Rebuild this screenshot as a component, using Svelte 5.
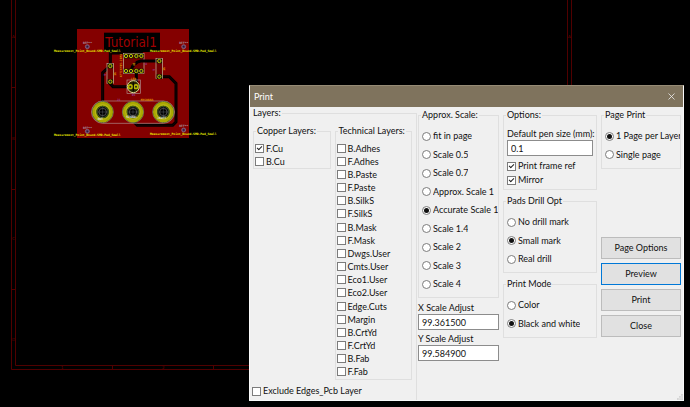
<script>
  // Layers that can be printed
  let copperLayers = $state([
    { name: 'F.Cu', checked: true },
    { name: 'B.Cu', checked: false }
  ]);

  let technicalLayers = $state(
    [
      'B.Adhes', 'F.Adhes', 'B.Paste', 'F.Paste', 'B.SilkS', 'F.SilkS',
      'B.Mask', 'F.Mask', 'Dwgs.User', 'Cmts.User', 'Eco1.User', 'Eco2.User',
      'Edge.Cuts', 'Margin', 'B.CrtYd', 'F.CrtYd', 'B.Fab', 'F.Fab'
    ].map((name) => ({ name, checked: false }))
  );

  const scales = [
    'fit in page', 'Scale 0.5', 'Scale 0.7', 'Approx. Scale 1',
    'Accurate Scale 1', 'Scale 1.4', 'Scale 2', 'Scale 3', 'Scale 4'
  ];
  const drillOptions = ['No drill mark', 'Small mark', 'Real drill'];
  const printModes = ['Color', 'Black and white'];
  const pagePrints = ['1 Page per Layer', 'Single page'];

  let scale = $state('Accurate Scale 1');
  let drill = $state('Small mark');
  let mode = $state('Black and white');
  let pagePrint = $state('1 Page per Layer');

  let penSize = $state('0.1');
  let frameRef = $state(true);
  let mirror = $state(true);
  let xScale = $state('99.361500');
  let yScale = $state('99.584900');
  let excludeEdges = $state(false);
  let open = $state(true);

  // Board drawing
  const footprint = 'Measurement_Point_Round-SMD-Pad_Small';
  const testPoints = [
    { x: 112, y: 80, tx: 12, ty: 96 },
    { x: 401, y: 80, tx: 300, ty: 96 },
    { x: 112, y: 334, tx: 12, ty: 349 },
    { x: 401, y: 330, tx: 300, ty: 346 }
  ];
  const pots = [158, 249, 340];
  const icPins = [228, 243, 259, 274];
  const resistors = [
    { x: 181, y1: 138, y2: 185 },
    { x: 328, y1: 123, y2: 170 }
  ];
</script>

<main class="desktop">
  <svg class="canvas" viewBox="0 0 690 407" preserveAspectRatio="xMinYMin slice" aria-hidden="true">
    <!-- sheet frame -->
    <g class="frame">
      <path d="M11.5 0V369.5H571.5V0" />
      <path d="M15.5 0V365.5H567.5V0" />
      <path d="M11 87.5h4M11 189.5h4M11 289.5h4M112.5 366v4M213.5 366v4" />
    </g>
    <g class="frame-text">
      <text x="12" y="38">A</text>
      <text x="12" y="140">B</text>
      <text x="12" y="240">C</text>
      <text x="12" y="341">D</text>
      <text x="61" y="369">1</text>
      <text x="162" y="369">2</text>
      <text x="568" y="38">A</text>
    </g>

    <!-- pcb, drawn at three units per pixel -->
    <g transform="translate(50 20) scale(0.33333)">
      <rect x="81" y="27" width="336" height="327" fill="#840000" />
      <rect x="162" y="38" width="168" height="58" fill="#000" />
      <text class="title" x="166" y="82">Tutorial1</text>

      <!-- tracks -->
      <g class="track">
        <path d="M181 138V99H274V108" />
        <path d="M181 138L158 158V275" />
        <path d="M181 185V192L189 200H240" />
        <path d="M328 170H358L378 190V306L368 316H262L249 303" />
      </g>
      <g class="track-edge">
        <path d="M181 138V99H274" />
        <path d="M181 138L158 158V275" />
        <path d="M181 185V192L189 200H240" />
        <path d="M328 170H358L378 190V306L368 316H262L249 303" />
      </g>

      <!-- ic -->
      <rect x="220" y="101" width="62" height="59" class="outline" />
      <g class="track">
        <path d="M243 153L248 138L262 126L272 123H328" />
        <path d="M259 153V200" />
      </g>
      {#each icPins as x}
        {#each [108, 153] as y}
          <rect x={x - 7} y={y - 7} width="14" height="14" fill="#111400" />
          <circle cx={x} cy={y} r="5" class="pad" />
        {/each}
      {/each}
      <text class="part" transform="translate(217 172) rotate(-90)">ATTINY85-20PU</text>
      <text class="part" transform="translate(255 138) rotate(-90)">U1</text>
      <text class="ref" x="286" y="136">U</text>

      <!-- resistors -->
      {#each resistors as r}
        <rect x={r.x - 10} y={r.y1 - 7} width="19" height={r.y2 - r.y1 + 13} class="outline" />
        <rect x={r.x - 8} y={r.y1 - 7} width="16" height="14" fill="#111400" />
        <rect x={r.x - 8} y={r.y2 - 7} width="16" height="14" fill="#111400" />
        <circle cx={r.x} cy={r.y1} r="5" class="pad" />
        <circle cx={r.x} cy={r.y2} r="5" class="pad" />
        <text class="part" transform="translate({r.x + 18} {r.y1 + 29}) rotate(-90)">1k</text>
        <text class="ref" transform="translate({r.x - 12} {r.y1 + 29}) rotate(-90)">R</text>
      {/each}

      <!-- led -->
      <rect x="231" y="180" width="40" height="40" class="courtyard" />
      <circle cx="250" cy="200" r="18" fill="#2a2600" stroke="#d8d890" stroke-width="3" />
      <circle cx="241" cy="200" r="8" fill="#b8b800" />
      <circle cx="258" cy="200" r="8" fill="#b8b800" />
      <circle cx="241" cy="200" r="3" fill="#222" />
      <circle cx="258" cy="200" r="3" fill="#222" />
      <path d="M250 187V214" stroke="#000" stroke-width="3" />
      <text class="part" x="242" y="180">LED</text>
      <text class="ref" x="246" y="227">D1</text>

      <!-- output pads -->
      <path d="M158 243H340A33 33 0 0 1 340 310H158A33 33 0 0 1 158 243Z" class="courtyard" />
      {#each pots as x}
        <circle cx={x} cy="276" r="32" fill="#183000" stroke="#8c9a80" stroke-width="2" />
        <circle cx={x} cy="276" r="25" fill="none" stroke="#aaa800" stroke-width="12" />
        <circle cx={x} cy="276" r="22" fill="none" stroke="#d0d060" stroke-width="1" />
        <circle cx={x} cy="276" r="17" fill="#111" stroke="#55772b" stroke-width="2" />
        <circle cx={x} cy="276" r="11" fill="#000" stroke="#686868" stroke-width="2" />
        <path d="M{x} 262V290M{x - 15} 276H{x + 15}" stroke="#7f8794" stroke-width="1" />
      {/each}
      <text class="net" x="143" y="299">OUT</text>
      <text class="net" x="229" y="295">SIGNAL</text>
      <text class="net" x="322" y="297">+BATT</text>
      <text class="ref" x="201" y="242">J1</text>
      <text class="part" x="272" y="242">MYCONN3</text>

      <!-- test points -->
      {#each testPoints as p}
        <circle cx={p.x} cy={p.y} r="6" fill="#593060" stroke="#8f7b94" stroke-width="2" />
        <circle cx={p.x} cy={p.y} r="2" fill="#222" />
        <text class="tp" x={p.x - 13} y={p.y - 8}>REF**</text>
        <text class="footprint" x={p.tx} y={p.ty}>{footprint}</text>
      {/each}
    </g>
  </svg>

  {#if open}
    <div class="dialog" role="dialog" aria-labelledby="dialog-title">
      <header class="titlebar">
        <h1 id="dialog-title">Print</h1>
        <button class="close" aria-label="Close window" onclick={() => (open = false)}>
          <svg viewBox="0 0 7 7" width="7" height="7"><path d="M0.5 0.5L6.5 6.5M6.5 0.5L0.5 6.5" /></svg>
        </button>
      </header>

      <form class="body" onsubmit={(e) => e.preventDefault()}>
        <fieldset class="layers">
          <legend>Layers:</legend>
          <div class="layer-groups">
            <fieldset class="checks">
              <legend>Copper Layers:</legend>
              {#each copperLayers as layer}
                <label><input type="checkbox" bind:checked={layer.checked} />{layer.name}</label>
              {/each}
            </fieldset>
            <fieldset class="checks">
              <legend>Technical Layers:</legend>
              {#each technicalLayers as layer}
                <label><input type="checkbox" bind:checked={layer.checked} />{layer.name}</label>
              {/each}
            </fieldset>
          </div>
          <label class="exclude"><input type="checkbox" bind:checked={excludeEdges} />Exclude Edges_Pcb Layer</label>
        </fieldset>

        <div class="column">
          <fieldset class="radios">
            <legend>Approx. Scale:</legend>
            {#each scales as item}
              <label><input type="radio" name="scale" value={item} bind:group={scale} /><span>{item}</span></label>
            {/each}
          </fieldset>
          <label class="field">X Scale Adjust<input type="text" bind:value={xScale} /></label>
          <label class="field">Y Scale Adjust<input type="text" bind:value={yScale} /></label>
        </div>

        <div class="column options">
          <fieldset class="pen">
            <legend>Options:</legend>
            <label class="field">Default pen size (mm):<input type="text" bind:value={penSize} /></label>
            <label><input type="checkbox" bind:checked={frameRef} />Print frame ref</label>
            <label><input type="checkbox" bind:checked={mirror} />Mirror</label>
          </fieldset>
          <fieldset class="radios">
            <legend>Pads Drill Opt</legend>
            {#each drillOptions as item}
              <label><input type="radio" name="drill" value={item} bind:group={drill} /><span>{item}</span></label>
            {/each}
          </fieldset>
          <fieldset class="radios">
            <legend>Print Mode</legend>
            {#each printModes as item}
              <label><input type="radio" name="mode" value={item} bind:group={mode} /><span>{item}</span></label>
            {/each}
          </fieldset>
        </div>

        <div class="column last">
          <fieldset class="radios">
            <legend>Page Print</legend>
            {#each pagePrints as item}
              <label><input type="radio" name="page" value={item} bind:group={pagePrint} /><span>{item}</span></label>
            {/each}
          </fieldset>
          <div class="buttons">
            <button type="button">Page Options</button>
            <button type="button" class="default">Preview</button>
            <button type="button">Print</button>
            <button type="button" onclick={() => (open = false)}>Close</button>
          </div>
        </div>
      </form>

      <svg class="grip" viewBox="0 0 6 6" width="6" height="6" aria-hidden="true">
        <path d="M4 0h2v2h-2zM2 2h2v2h-2zM4 2h2v2h-2zM0 4h2v2h-2zM2 4h2v2h-2zM4 4h2v2h-2z" />
      </svg>
    </div>
  {/if}
</main>

<style>
  :global(body) {
    margin: 0;
    background: #000;
  }

  .desktop {
    position: relative;
    min-height: 100vh;
    overflow: hidden;
    background: #000;
    font-family: Lato, "Open Sans", sans-serif;
    font-size: 9px;
    line-height: 12px;
    color: #111;
  }

  /* Board canvas */
  .canvas {
    position: absolute;
    inset: 0;
    width: 100%;
    height: 100%;
  }

  .frame path {
    fill: none;
    stroke: #500000;
    stroke-width: 1;
  }

  .frame-text {
    fill: #6a0000;
    font-size: 4px;
  }

  .title {
    font-family: "DejaVu Sans Condensed", "DejaVu Sans", sans-serif;
    font-size: 40px;
    fill: #a00000;
  }

  .track {
    fill: none;
    stroke: #000;
    stroke-width: 9;
  }

  .track-edge {
    fill: none;
    stroke: #260000;
    stroke-width: 2;
  }

  .outline {
    fill: #700000;
    stroke: #c8c8a8;
    stroke-width: 2;
  }

  .courtyard {
    fill: none;
    stroke: #b09090;
    stroke-width: 2;
  }

  .pad {
    fill: #222;
    stroke: #b8c000;
    stroke-width: 3;
  }

  .part,
  .ref,
  .net,
  .tp,
  .footprint {
    font-family: "DejaVu Sans Mono", monospace;
    font-size: 9px;
    font-weight: bold;
  }

  .part {
    fill: #e09800;
  }

  .ref {
    fill: #9a3c9a;
  }

  .net {
    fill: #e0e0e0;
  }

  .tp {
    fill: #a890a0;
  }

  .footprint {
    fill: #f0f000;
  }

  /* Dialog window */
  .dialog {
    position: absolute;
    top: 85px;
    left: 249px;
    right: 6px;
    background: #f0f0f0;
    border: 1px solid #fafafa;
    border-top-color: #968b75;
    box-sizing: border-box;
  }

  .titlebar {
    display: flex;
    align-items: center;
    justify-content: space-between;
    height: 21px;
    padding: 0 8px 0 4px;
    background: #7f735d;
  }

  h1 {
    margin: 0;
    font-size: 9px;
    font-weight: normal;
    color: #fff;
  }

  .close {
    display: flex;
    padding: 0;
    border: 0;
    background: none;
  }

  .close path {
    stroke: #eee;
    stroke-width: 0.8;
    fill: none;
  }

  .body {
    display: grid;
    grid-template-columns: 166fr 85fr 98fr 80fr;
    min-height: 293px;
    padding: 0 2px;
  }

  fieldset {
    min-width: 0;
    margin: 0;
    padding: 0;
    border: 1px solid #dfdfdf;
    box-sizing: border-box;
  }

  legend {
    margin-left: 2px;
    padding: 0 1px;
  }

  label {
    display: flex;
    align-items: center;
    white-space: nowrap;
  }

  .column {
    display: flex;
    flex-direction: column;
    min-width: 0;
    padding: 2px 4px 0 0;
  }

  .last {
    padding-right: 0;
  }

  /* Layer lists */
  .layers {
    display: flex;
    flex-direction: column;
    margin-right: 1px;
    border-width: 1px 1px 0 0;
  }

  .layers > legend {
    margin-left: 0;
  }

  .layer-groups {
    display: grid;
    grid-template-columns: 1fr 1fr;
    gap: 4px;
    align-items: start;
    padding: 6px 4px 0 1px;
  }

  .checks {
    padding: 5px 0 0;
  }

  .checks label {
    height: 13px;
    padding-left: 1px;
  }

  .checks label:nth-of-type(6n) {
    margin-bottom: 1px;
  }

  .exclude {
    margin-top: 5px;
  }

  /* Radio groups */
  .radios {
    padding: 6px 0 4px;
  }

  .radios label {
    height: 18px;
    margin-left: 3px;
    overflow: hidden;
  }

  .radios label:nth-of-type(even) {
    height: 19px;
  }

  .radios span {
    overflow: hidden;
  }

  input[type='checkbox'],
  input[type='radio'] {
    appearance: none;
    flex: none;
    display: grid;
    place-items: center;
    width: 9px;
    height: 9px;
    margin: 0 2px 0 0;
    border: 1px solid #7c7c7c;
    background: #fff;
    box-sizing: border-box;
  }

  input[type='radio'] {
    border-radius: 50%;
  }

  input[type='radio']:checked::before {
    content: '';
    width: 5px;
    height: 5px;
    border-radius: 50%;
    background: #111;
  }

  input[type='checkbox']:checked::before {
    content: '';
    width: 5px;
    height: 3px;
    margin-bottom: 2px;
    border: solid #222;
    border-width: 0 0 1px 1px;
    box-sizing: border-box;
    rotate: -45deg;
  }

  .field {
    display: block;
    margin-top: 3px;
  }

  .field input {
    display: block;
    width: 100%;
    height: 16px;
    padding: 0 3px;
    border: 1px solid #8c8c8c;
    background: #fff;
    box-sizing: border-box;
    font: inherit;
    color: inherit;
  }

  .column > .field {
    margin-top: 4px;
  }

  .column > .field + .field {
    margin-top: 3px;
  }

  .options {
    gap: 5px;
  }

  .pen {
    padding: 7px 0 2px;
  }

  .pen label {
    height: 14px;
    margin: 0 3px;
  }

  .pen .field {
    height: auto;
    margin-bottom: 3px;
  }

  /* Buttons */
  .buttons {
    display: flex;
    flex-direction: column;
    gap: 4px;
    margin-top: 68px;
  }

  .buttons button {
    height: 22px;
    padding: 0;
    border: 1px solid #bcbcbc;
    background: #e1e1e1;
    font: inherit;
    color: inherit;
  }

  .buttons .default {
    border-color: #0078d7;
  }

  .grip {
    position: absolute;
    right: 0;
    bottom: 0;
    fill: #c0c0c0;
    stroke: #f0f0f0;
    stroke-width: 0.5;
  }
</style>
